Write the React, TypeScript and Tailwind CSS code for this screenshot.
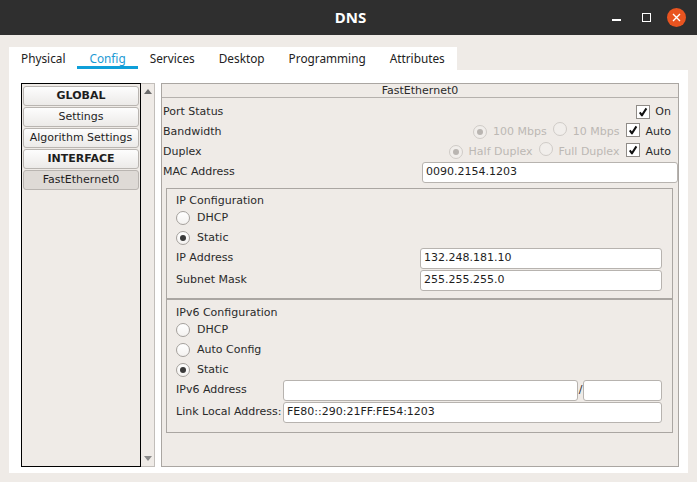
import React from "react";

const Radio = ({ checked = false, disabled = false }: { checked?: boolean; disabled?: boolean }) => (
  <span
    className={`inline-flex items-center justify-center w-[14px] h-[14px] rounded-full border shrink-0 ${
      disabled ? "border-[#cfcbc7] bg-[#f1eeeb]" : "border-[#a5a19d] bg-gradient-to-b from-white to-[#f4f2f0]"
    }`}
  >
    {checked && (
      <span className={`w-[6px] h-[6px] rounded-full ${disabled ? "bg-[#b9b5b1]" : "bg-[#3a3a3a]"}`} />
    )}
  </span>
);

const Check = () => (
  <span className="inline-flex items-center justify-center w-[14px] h-[14px] border border-[#8f8b87] bg-white shrink-0">
    <svg width="10" height="10" viewBox="0 0 10 10">
      <path d="M1.8 5.4 L3.9 8.4 L8.4 1.4" fill="none" stroke="#111" strokeWidth="2" strokeLinejoin="round" />
    </svg>
  </span>
);

const Input = ({ value = "", className = "" }: { value?: string; className?: string }) => (
  <div
    className={`h-[21px] bg-white border border-[#b7b3af] rounded-[3px] pl-[3px] flex items-center text-[11px] text-[#1e1e1e] ${className}`}
  >
    {value}
  </div>
);

const ListItem = ({ label, bold = false, selected = false }: { label: string; bold?: boolean; selected?: boolean }) => (
  <div
    className={`h-[20px] mb-[1px] border border-[#b9b5b1] rounded-[3px] flex items-center justify-center text-[11px] ${
      bold ? "font-bold" : ""
    } ${selected ? "bg-[#dedad6]" : "bg-gradient-to-b from-[#fdfdfd] to-[#eceae8]"} text-[#1e1e1e]`}
  >
    {label}
  </div>
);

export default function App() {
  const tabs = ["Physical", "Config", "Services", "Desktop", "Programming", "Attributes"];
  return (
    <div
      className="w-[697px] h-[482px] bg-[#efebe7] flex flex-col overflow-hidden text-[#2a2a2a]"
      style={{ fontFamily: '"DejaVu Sans", sans-serif' }}
    >
      {/* Title bar */}
      <div className="h-[35px] bg-[#2f2f2f] flex items-center relative shrink-0">
        <div
          className="flex-1 text-center text-white font-bold text-[15px] pl-[4px]"
          style={{ fontFamily: '"Noto Sans", sans-serif' }}
        >
          DNS
        </div>
        <div className="absolute right-[6px] top-0 h-[35px] flex items-center">
          <div className="w-[30px] h-[35px] flex items-center justify-center">
            <span className="w-[9px] h-[1.5px] bg-white mt-[5px]" />
          </div>
          <div className="w-[30px] h-[35px] flex items-center justify-center">
            <span className="w-[9px] h-[9px] border-[1.5px] border-white" />
          </div>
          <div className="w-[30px] h-[35px] flex items-center justify-center">
            <span className="w-[19px] h-[19px] rounded-full bg-[#e95420] flex items-center justify-center -mt-[1px]">
              <svg width="9" height="9" viewBox="0 0 9 9">
                <path d="M1 1 L8 8 M8 1 L1 8" stroke="white" strokeWidth="1.4" />
              </svg>
            </span>
          </div>
        </div>
      </div>

      {/* Tabs */}
      <div
        className="ml-[9px] mt-[12px] w-[448px] h-[23px] bg-white flex items-start"
        style={{ fontFamily: '"Noto Sans", sans-serif' }}
      >
        {tabs.map((t) => (
          <div
            key={t}
            className={`h-[23px] px-[12px] flex items-center text-[11.8px] relative ${
              t === "Config" ? "text-[#1b9ad4]" : "text-[#222]"
            }`}
          >
            <span>{t}</span>
            {t === "Config" && <span className="absolute left-0 right-0 bottom-[1px] h-[3px] bg-[#0e9fd9]" />}
          </div>
        ))}
      </div>

      {/* Panel */}
      <div className="ml-[9px] w-[679px] h-[403px] bg-white flex pt-[13px] pl-[12px]">
        {/* Left list */}
        <div className="flex h-[384px]">
          <div className="w-[120px] h-full border border-black px-[1px] pt-[2px] bg-[#efebe7]">
            <ListItem label="GLOBAL" bold />
            <ListItem label="Settings" />
            <ListItem label="Algorithm Settings" />
            <ListItem label="INTERFACE" bold />
            <ListItem label="FastEthernet0" selected />
          </div>
          <div className="w-[14px] h-full border border-l-0 border-[#c2beba] bg-[#efebe7] flex flex-col justify-between">
            <div className="h-[15px] flex items-center justify-center">
              <svg width="8" height="5" viewBox="0 0 8 5">
                <path d="M0 5 L4 0 L8 5 Z" fill="#6b6b6b" />
              </svg>
            </div>
            <div className="h-[15px] flex items-center justify-center">
              <svg width="8" height="5" viewBox="0 0 8 5">
                <path d="M0 0 L4 5 L8 0 Z" fill="#8a8a8a" />
              </svg>
            </div>
          </div>
        </div>

        {/* Right panel */}
        <div className="ml-[6px] w-[518px] h-[384px] border border-[#aaa6a2] bg-[#efebe7] flex flex-col text-[11px]">
          <div className="h-[14px] border-b border-[#b5b1ad] flex items-center justify-center leading-[13px]">
            FastEthernet0
          </div>
          <div className="pt-[4px] flex flex-col">
            <div className="h-[20px] flex items-center justify-between pl-[1px] pr-[7px]">
              <span>Port Status</span>
              <span className="flex items-center gap-[5px]">
                <Check />
                <span>On</span>
              </span>
            </div>
            <div className="h-[20px] flex items-center justify-between pl-[1px] pr-[7px]">
              <span>Bandwidth</span>
              <span className="flex items-center">
                <Radio checked disabled />
                <span className="ml-[6px] text-[#bcb8b4]">100 Mbps</span>
                <span className="ml-[6px]"><Radio disabled /></span>
                <span className="ml-[6px] text-[#bcb8b4]">10 Mbps</span>
                <span className="ml-[7px]"><Check /></span>
                <span className="ml-[5px]">Auto</span>
              </span>
            </div>
            <div className="h-[20px] flex items-center justify-between pl-[1px] pr-[7px]">
              <span>Duplex</span>
              <span className="flex items-center">
                <Radio checked disabled />
                <span className="ml-[6px] text-[#bcb8b4]">Half Duplex</span>
                <span className="ml-[6px]"><Radio disabled /></span>
                <span className="ml-[6px] text-[#bcb8b4]">Full Duplex</span>
                <span className="ml-[7px]"><Check /></span>
                <span className="ml-[5px]">Auto</span>
              </span>
            </div>
            <div className="h-[21px] flex items-center pl-[1px]">
              <span className="flex-1">MAC Address</span>
              <Input value="0090.2154.1203" className="w-[256px]" />
            </div>
          </div>

          {/* IP Configuration */}
          <div className="mt-[5px] ml-[4px] w-[507px] border border-[#aaa6a2] pl-[9px] pt-[5px] pb-[7px] flex flex-col">
            <div className="h-[14px] leading-[14px]">IP Configuration</div>
            <div className="h-[20px] flex items-center gap-[7px]">
              <Radio />
              <span>DHCP</span>
            </div>
            <div className="h-[20px] flex items-center gap-[7px]">
              <Radio checked />
              <span>Static</span>
            </div>
            <div className="h-[21px] flex items-center">
              <span className="w-[244px]">IP Address</span>
              <Input value="132.248.181.10" className="w-[242px]" />
            </div>
            <div className="h-[21px] mt-[1px] flex items-center">
              <span className="w-[244px]">Subnet Mask</span>
              <Input value="255.255.255.0" className="w-[242px]" />
            </div>
          </div>

          {/* IPv6 Configuration */}
          <div className="ml-[4px] w-[507px] border border-[#aaa6a2] pl-[9px] pt-[6px] pb-[9px] flex flex-col">
            <div className="h-[14px] leading-[14px]">IPv6 Configuration</div>
            <div className="h-[20px] flex items-center gap-[7px]">
              <Radio />
              <span>DHCP</span>
            </div>
            <div className="h-[20px] flex items-center gap-[7px]">
              <Radio />
              <span>Auto Config</span>
            </div>
            <div className="h-[20px] flex items-center gap-[7px]">
              <Radio checked />
              <span>Static</span>
            </div>
            <div className="h-[21px] flex items-center">
              <span className="w-[107px]">IPv6 Address</span>
              <Input className="w-[295px]" />
              <span className="w-[5px] text-center">/</span>
              <Input className="w-[79px]" />
            </div>
            <div className="h-[21px] mt-[1px] flex items-center">
              <span className="w-[107px] whitespace-nowrap">Link Local Address:</span>
              <Input value="FE80::290:21FF:FE54:1203" className="w-[379px]" />
            </div>
          </div>
        </div>
      </div>
    </div>
  );
}
